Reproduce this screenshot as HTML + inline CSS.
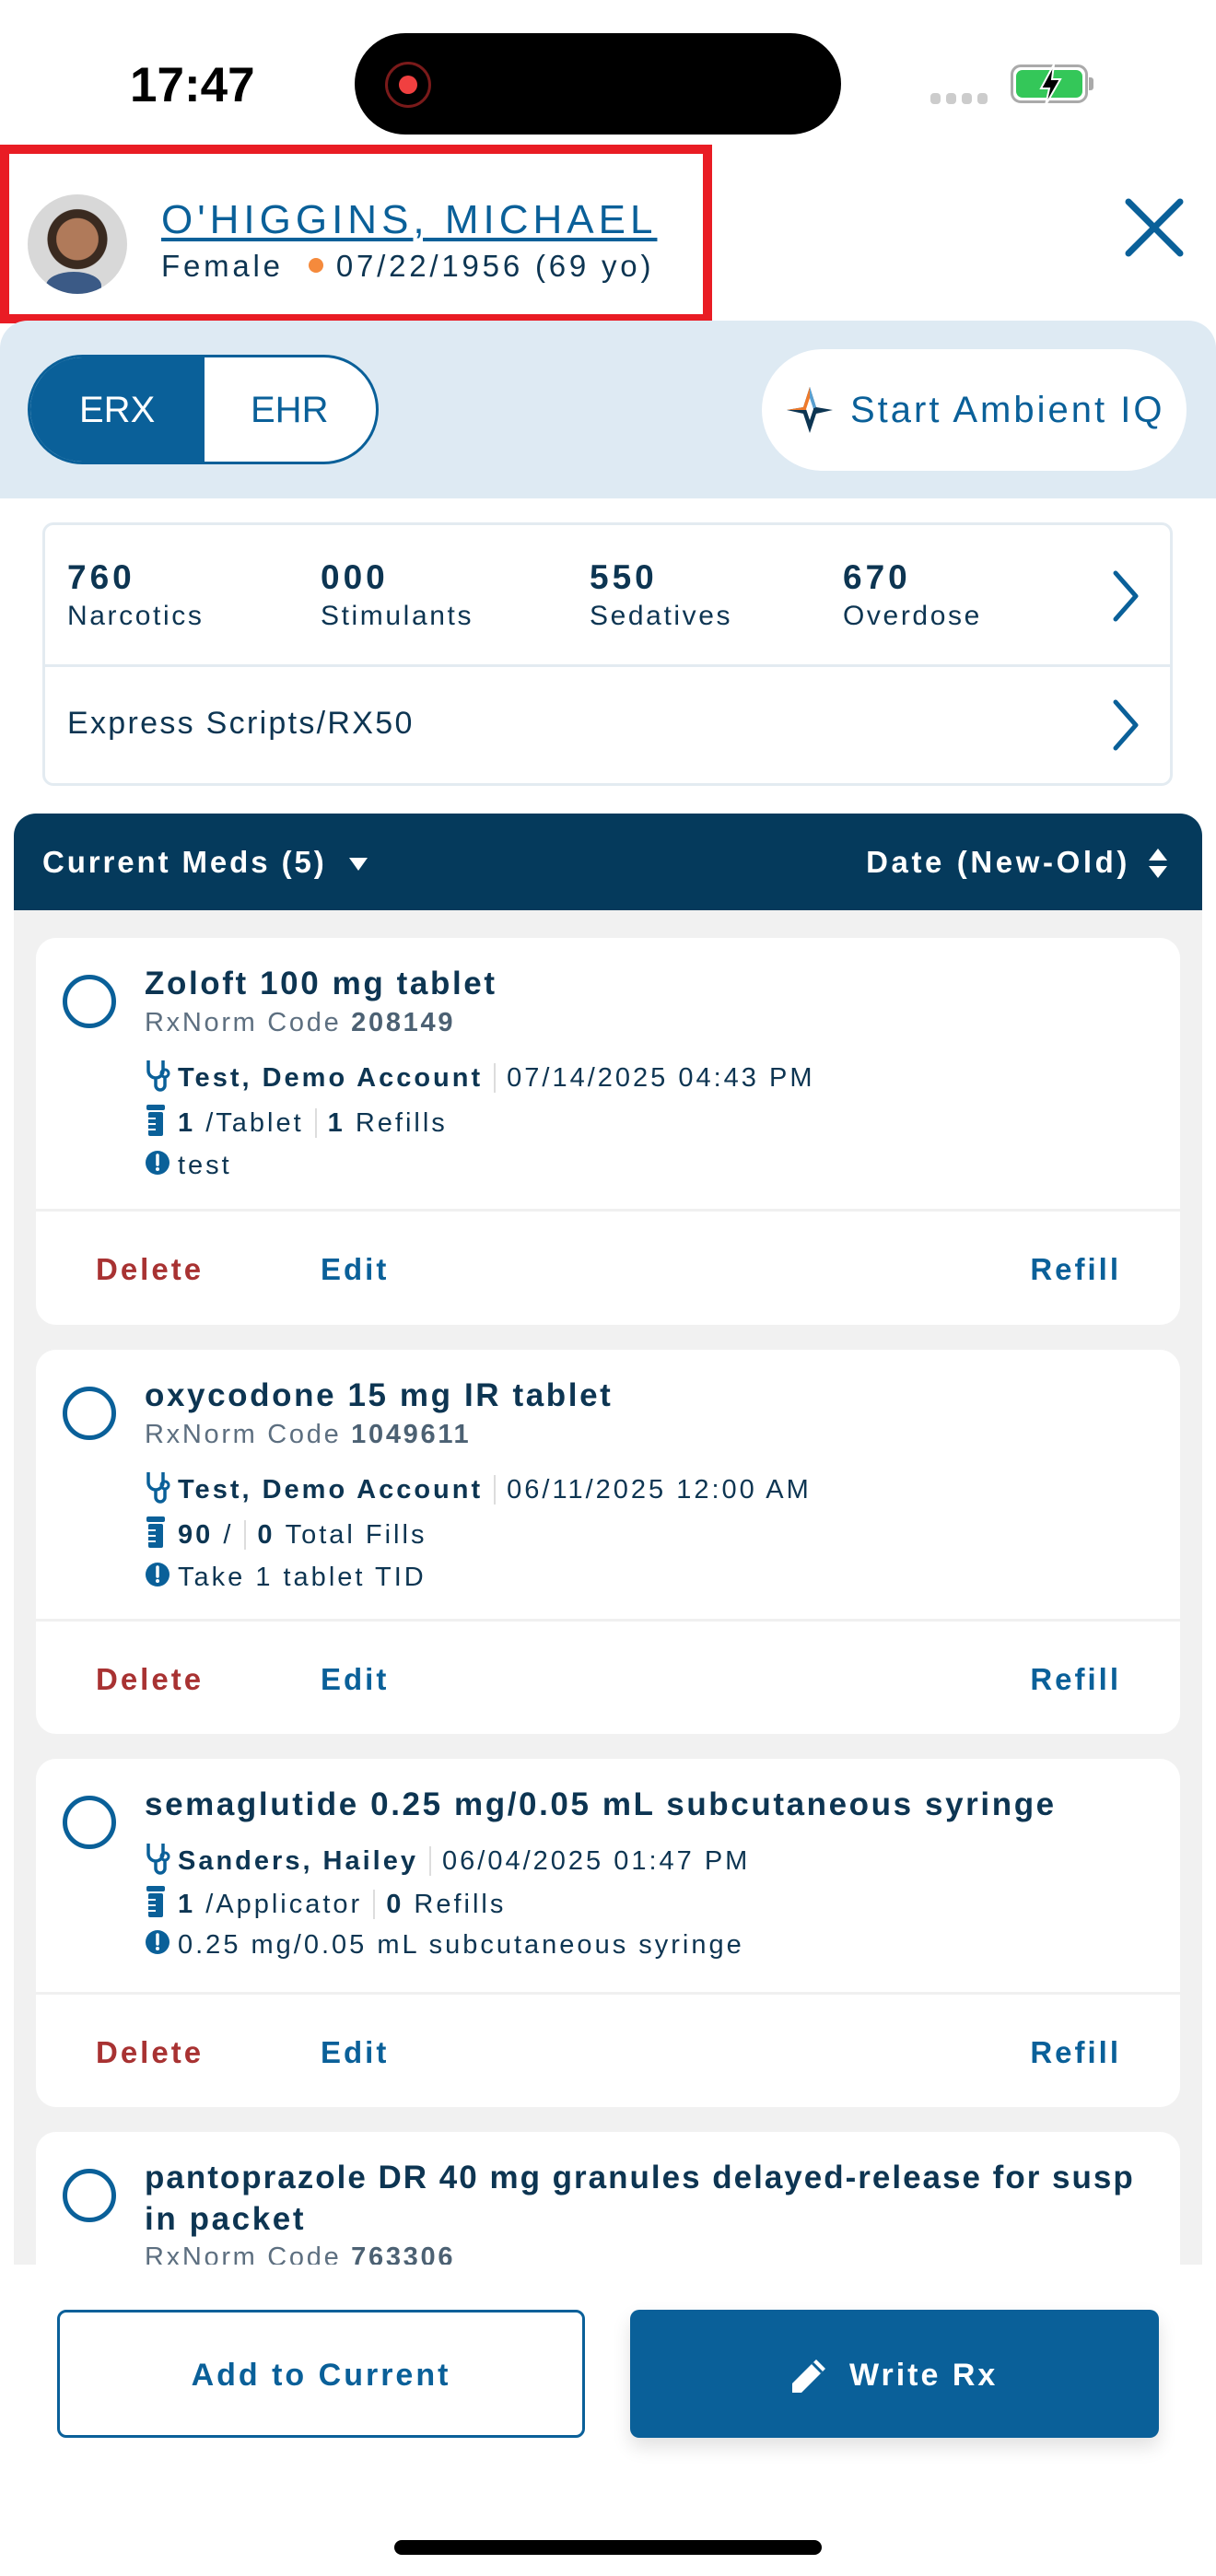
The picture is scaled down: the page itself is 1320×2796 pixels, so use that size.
<!DOCTYPE html>
<html><head><meta charset="utf-8"><style>
*{margin:0;padding:0;box-sizing:border-box}
body{width:1320px;height:2796px;position:relative;background:#fff;font-family:"Liberation Sans",sans-serif;color:#0d3552;overflow:hidden}
.a{position:absolute;line-height:1;white-space:nowrap}
.card{position:absolute;left:39px;width:1242px;background:#fff;border-radius:22px;overflow:hidden}
.circ{position:absolute;left:68px;width:58px;height:58px;border:5px solid #0a6099;border-radius:50%}
.t{left:157px;font-size:35px;font-weight:bold;color:#0d3552;letter-spacing:2.6px}
.rx{left:157px;font-size:29px;color:#5d6f80;letter-spacing:2.7px}
.rx b{color:#4c6173}
.ln{left:157px;font-size:29px;color:#0d3552;display:flex;align-items:center;letter-spacing:3px}
.ln .ic{width:36px;display:inline-block}
.sep{display:inline-block;width:2px;height:32px;background:#ddd;margin:0 12px}
.div{position:absolute;left:0;right:0;height:3px;background:#f0f0f0}
.act{font-size:33px;font-weight:bold;letter-spacing:3px}
</style></head><body>
<!-- status bar -->
<div class="a" style="left:141px;top:66px;font-size:53px;font-weight:bold;color:#000">17:47</div>
<div class="a" style="left:385px;top:36px;width:528px;height:110px;background:#000;border-radius:55px"></div>
<div class="a" style="left:418px;top:67px;width:50px;height:50px;border:3px solid #7a1a1a;border-radius:50%"></div>
<div class="a" style="left:433px;top:82px;width:20px;height:20px;background:#f04040;border-radius:50%"></div>
<div class="a" style="left:1010px;top:101px;width:11px;height:12px;background:#ccc;border-radius:4px"></div>
<div class="a" style="left:1027px;top:101px;width:11px;height:12px;background:#ccc;border-radius:4px"></div>
<div class="a" style="left:1044px;top:101px;width:11px;height:12px;background:#ccc;border-radius:4px"></div>
<div class="a" style="left:1061px;top:101px;width:11px;height:12px;background:#ccc;border-radius:4px"></div>
<div class="a" style="left:1097px;top:70px;width:84px;height:42px;border:3px solid #aaa;border-radius:11px;padding:3px"><div style="width:100%;height:100%;background:#34c759;border-radius:7px"></div></div>
<div class="a" style="left:1182px;top:84px;width:5px;height:14px;background:#aaa;border-radius:0 3px 3px 0"></div>
<svg class="a" style="left:1124px;top:68px" width="32" height="48" viewBox="0 0 32 48"><path d="M20 2 L6 28 H15 L11 46 L27 18 H18 Z" fill="#000" stroke="#fff" stroke-width="2"/></svg>

<!-- header -->
<div class="a" style="left:0;top:157px;width:773px;height:194px;border:10px solid #e91c24"></div>
<div class="a" style="left:30px;top:211px;width:108px;height:108px;border-radius:50%;background:radial-gradient(circle at 50% 45%,#b07a5a 0 28%,#3a2a20 29% 40%,#d8d8d8 41%);overflow:hidden"><div style="position:absolute;left:20px;top:84px;width:60px;height:30px;background:#3b5a86;border-radius:50% 50% 0 0"></div></div>
<div class="a" style="left:175px;top:217px;font-size:44px;color:#0a6099;text-decoration:underline;text-decoration-thickness:4px;text-underline-offset:5px;letter-spacing:5px">O'HIGGINS, MICHAEL</div>
<div class="a" style="left:175px;top:272px;font-size:33px;color:#0d3552;letter-spacing:3.8px">Female <span style="display:inline-block;width:16px;height:16px;border-radius:50%;background:#f58a3c;margin:0 14px 4px"></span>07/22/1956 (69 yo)</div>
<svg class="a" style="left:1220px;top:214px" width="66" height="66" viewBox="0 0 66 66"><path d="M5 5 L61 61 M61 5 L5 61" stroke="#0a6099" stroke-width="7" stroke-linecap="round"/></svg>

<!-- blue panel -->
<div class="a" style="left:0;top:348px;width:1320px;height:193px;background:#deeaf3;border-radius:30px 30px 0 0"></div>
<div class="a" style="left:30px;top:385px;width:381px;height:119px;border:3px solid #0a6099;border-radius:60px;background:#fff;overflow:hidden"><div style="position:absolute;left:0;top:0;width:189px;height:100%;background:#0a6099"></div></div>
<div class="a" style="left:86px;top:425px;font-size:40px;color:#fff">ERX</div>
<div class="a" style="left:272px;top:425px;font-size:40px;color:#0a6099">EHR</div>
<div class="a" style="left:827px;top:379px;width:461px;height:132px;background:#fff;border-radius:66px"></div>
<svg class="a" style="left:852px;top:418px" width="54" height="54" viewBox="0 0 54 54"><path d="M27 2 L34 24 L52 27 L34 31 L27 52 L20 31 L2 27 L20 24 Z" fill="#0d3552"/><path d="M27 2 L34 24 L27 27 Z" fill="#5aa0d0"/><path d="M27 2 L20 24 L2 27 L27 27 Z" fill="#f07a2a"/><path d="M27 14 L31 26 L27 38 L23 26 Z" fill="#fff"/></svg>
<div class="a" style="left:923px;top:425px;font-size:40px;color:#0a6099;letter-spacing:3px">Start Ambient IQ</div>

<!-- PDMP card -->
<div class="a" style="left:46px;top:567px;width:1227px;height:286px;border:3px solid #e3ebf1;border-radius:12px"></div>
<div class="a" style="left:48px;top:721px;width:1223px;height:3px;background:#e3ebf1"></div>
<div class="a" style="left:73px;top:608px;font-size:37px;font-weight:bold;letter-spacing:4px">760</div>
<div class="a" style="left:348px;top:608px;font-size:37px;font-weight:bold;letter-spacing:4px">000</div>
<div class="a" style="left:640px;top:608px;font-size:37px;font-weight:bold;letter-spacing:4px">550</div>
<div class="a" style="left:915px;top:608px;font-size:37px;font-weight:bold;letter-spacing:4px">670</div>
<div class="a" style="left:73px;top:654px;font-size:30px;letter-spacing:2.6px">Narcotics</div>
<div class="a" style="left:348px;top:654px;font-size:30px;letter-spacing:2.6px">Stimulants</div>
<div class="a" style="left:640px;top:654px;font-size:30px;letter-spacing:2.6px">Sedatives</div>
<div class="a" style="left:915px;top:654px;font-size:30px;letter-spacing:2.6px">Overdose</div>
<div class="a" style="left:73px;top:768px;font-size:34px;letter-spacing:2.3px">Express Scripts/RX50</div>
<svg class="a" style="left:1205px;top:618px" width="34" height="58" viewBox="0 0 34 58"><path d="M6 4 L28 29 L6 54" fill="none" stroke="#0a6099" stroke-width="5" stroke-linecap="round" stroke-linejoin="round"/></svg>
<svg class="a" style="left:1205px;top:758px" width="34" height="58" viewBox="0 0 34 58"><path d="M6 4 L28 29 L6 54" fill="none" stroke="#0a6099" stroke-width="5" stroke-linecap="round" stroke-linejoin="round"/></svg>

<!-- list header -->
<div class="a" style="left:15px;top:883px;width:1290px;height:105px;background:#053a5c;border-radius:24px 24px 0 0"></div>
<div class="a" style="left:46px;top:919px;font-size:33px;color:#fff;font-weight:bold;letter-spacing:2.9px">Current Meds (5)</div>
<svg class="a" style="left:378px;top:930px" width="22" height="16"><path d="M1 1 H21 L11 15 Z" fill="#fff"/></svg>
<div class="a" style="right:93px;top:919px;font-size:33px;color:#fff;font-weight:bold;letter-spacing:3.6px">Date (New-Old)</div>
<svg class="a" style="left:1246px;top:920px" width="22" height="34"><path d="M11 1 L21 14 H1 Z M11 33 L21 20 H1 Z" fill="#fff"/></svg>

<!-- list area -->
<div class="a" style="left:15px;top:988px;width:1290px;height:1470px;background:#f1f1f1;overflow:hidden">
<div style="position:relative;left:-15px;top:-988px;width:1320px;height:2458px">

<!-- card 1 -->
<div class="card" style="top:1018px;height:420px">
 <div class="circ" style="top:40px;left:29px"></div>
 <div class="a t" style="top:32px;left:118px">Zoloft 100 mg tablet</div>
 <div class="a rx" style="top:78px;left:118px">RxNorm Code <b>208149</b></div>
 <div class="a ln" style="top:130px;left:118px"><span class="ic"><svg width="30" height="38" viewBox="0 0 30 38"><path d="M4 3 V14 a8 8 0 0 0 16 0 V3 M12 22 V30 a5 5 0 0 0 10 0 V22" fill="none" stroke="#0a6099" stroke-width="3.5"/><circle cx="22" cy="17" r="4" fill="none" stroke="#0a6099" stroke-width="3"/></svg></span><b>Test, Demo Account</b><span class="sep"></span>07/14/2025 04:43 PM</div>
 <div class="a ln" style="top:180px;left:118px"><span class="ic"><svg width="24" height="36" viewBox="0 0 24 36"><rect x="2" y="1" width="20" height="6" rx="2" fill="#0a6099"/><rect x="4" y="9" width="16" height="26" rx="2" fill="#0a6099"/><path d="M4 16 H12 M4 22 H12 M4 28 H12" stroke="#fff" stroke-width="2"/></svg></span><b>1</b>&nbsp;/Tablet<span class="sep"></span><b>1</b>&nbsp;Refills</div>
 <div class="a ln" style="top:230px;left:118px"><span class="ic"><svg width="28" height="28" viewBox="0 0 28 28"><circle cx="14" cy="14" r="13" fill="#0a6099"/><path d="M14 6 V16" stroke="#fff" stroke-width="3.5" stroke-linecap="round"/><circle cx="14" cy="21" r="2" fill="#fff"/></svg></span>test</div>
 <div class="div" style="top:294px"></div>
 <div class="a act" style="top:343px;left:65px;color:#a83232">Delete</div>
 <div class="a act" style="top:343px;left:309px;color:#0a6099">Edit</div>
 <div class="a act" style="top:343px;right:64px;color:#0a6099">Refill</div>
</div>

<!-- card 2 -->
<div class="card" style="top:1465px;height:417px">
 <div class="circ" style="top:40px;left:29px"></div>
 <div class="a t" style="top:32px;left:118px">oxycodone 15 mg IR tablet</div>
 <div class="a rx" style="top:78px;left:118px">RxNorm Code <b>1049611</b></div>
 <div class="a ln" style="top:130px;left:118px"><span class="ic"><svg width="30" height="38" viewBox="0 0 30 38"><path d="M4 3 V14 a8 8 0 0 0 16 0 V3 M12 22 V30 a5 5 0 0 0 10 0 V22" fill="none" stroke="#0a6099" stroke-width="3.5"/><circle cx="22" cy="17" r="4" fill="none" stroke="#0a6099" stroke-width="3"/></svg></span><b>Test, Demo Account</b><span class="sep"></span>06/11/2025 12:00 AM</div>
 <div class="a ln" style="top:180px;left:118px"><span class="ic"><svg width="24" height="36" viewBox="0 0 24 36"><rect x="2" y="1" width="20" height="6" rx="2" fill="#0a6099"/><rect x="4" y="9" width="16" height="26" rx="2" fill="#0a6099"/><path d="M4 16 H12 M4 22 H12 M4 28 H12" stroke="#fff" stroke-width="2"/></svg></span><b>90</b>&nbsp;/<span class="sep"></span><b>0</b>&nbsp;Total Fills</div>
 <div class="a ln" style="top:230px;left:118px"><span class="ic"><svg width="28" height="28" viewBox="0 0 28 28"><circle cx="14" cy="14" r="13" fill="#0a6099"/><path d="M14 6 V16" stroke="#fff" stroke-width="3.5" stroke-linecap="round"/><circle cx="14" cy="21" r="2" fill="#fff"/></svg></span>Take 1 tablet TID</div>
 <div class="div" style="top:292px"></div>
 <div class="a act" style="top:341px;left:65px;color:#a83232">Delete</div>
 <div class="a act" style="top:341px;left:309px;color:#0a6099">Edit</div>
 <div class="a act" style="top:341px;right:64px;color:#0a6099">Refill</div>
</div>

<!-- card 3 -->
<div class="card" style="top:1909px;height:378px">
 <div class="circ" style="top:40px;left:29px"></div>
 <div class="a t" style="top:32px;left:118px">semaglutide 0.25 mg/0.05 mL subcutaneous syringe</div>
 <div class="a ln" style="top:89px;left:118px"><span class="ic"><svg width="30" height="38" viewBox="0 0 30 38"><path d="M4 3 V14 a8 8 0 0 0 16 0 V3 M12 22 V30 a5 5 0 0 0 10 0 V22" fill="none" stroke="#0a6099" stroke-width="3.5"/><circle cx="22" cy="17" r="4" fill="none" stroke="#0a6099" stroke-width="3"/></svg></span><b>Sanders, Hailey</b><span class="sep"></span>06/04/2025 01:47 PM</div>
 <div class="a ln" style="top:137px;left:118px"><span class="ic"><svg width="24" height="36" viewBox="0 0 24 36"><rect x="2" y="1" width="20" height="6" rx="2" fill="#0a6099"/><rect x="4" y="9" width="16" height="26" rx="2" fill="#0a6099"/><path d="M4 16 H12 M4 22 H12 M4 28 H12" stroke="#fff" stroke-width="2"/></svg></span><b>1</b>&nbsp;/Applicator<span class="sep"></span><b>0</b>&nbsp;Refills</div>
 <div class="a ln" style="top:185px;left:118px"><span class="ic"><svg width="28" height="28" viewBox="0 0 28 28"><circle cx="14" cy="14" r="13" fill="#0a6099"/><path d="M14 6 V16" stroke="#fff" stroke-width="3.5" stroke-linecap="round"/><circle cx="14" cy="21" r="2" fill="#fff"/></svg></span>0.25 mg/0.05 mL subcutaneous syringe</div>
 <div class="div" style="top:253px"></div>
 <div class="a act" style="top:302px;left:65px;color:#a83232">Delete</div>
 <div class="a act" style="top:302px;left:309px;color:#0a6099">Edit</div>
 <div class="a act" style="top:302px;right:64px;color:#0a6099">Refill</div>
</div>

<!-- card 4 -->
<div class="card" style="top:2314px;height:300px">
 <div class="circ" style="top:40px;left:29px"></div>
 <div class="a t" style="top:32px;left:118px;letter-spacing:2px">pantoprazole DR 40 mg granules delayed-release for susp</div>
 <div class="a t" style="top:77px;left:118px">in packet</div>
 <div class="a rx" style="top:122px;left:118px">RxNorm Code <b>763306</b></div>
</div>
</div></div>

<!-- bottom -->
<div class="a" style="left:0;top:2458px;width:1320px;height:338px;background:#fff"></div>
<div class="a" style="left:62px;top:2507px;width:573px;height:139px;border:3px solid #0a6099;border-radius:10px"></div>
<div class="a" style="left:62px;top:2561px;width:573px;text-align:center;font-size:34px;font-weight:bold;color:#0a6099;letter-spacing:3px">Add to Current</div>
<div class="a" style="left:684px;top:2507px;width:574px;height:139px;background:#0a6099;border-radius:10px;box-shadow:0 10px 20px rgba(0,0,0,.12)"></div>
<svg class="a" style="left:856px;top:2557px" width="44" height="44" viewBox="0 0 44 44"><path d="M30 4 L40 14 L14 40 L4 40 L4 30 Z" fill="#fff"/><path d="M26 8 L36 18" stroke="#0a6099" stroke-width="3"/></svg>
<div class="a" style="left:922px;top:2561px;font-size:34px;font-weight:bold;color:#fff;letter-spacing:3px">Write Rx</div>
<div class="a" style="left:428px;top:2757px;width:464px;height:16px;background:#000;border-radius:8px"></div>
</body></html>
